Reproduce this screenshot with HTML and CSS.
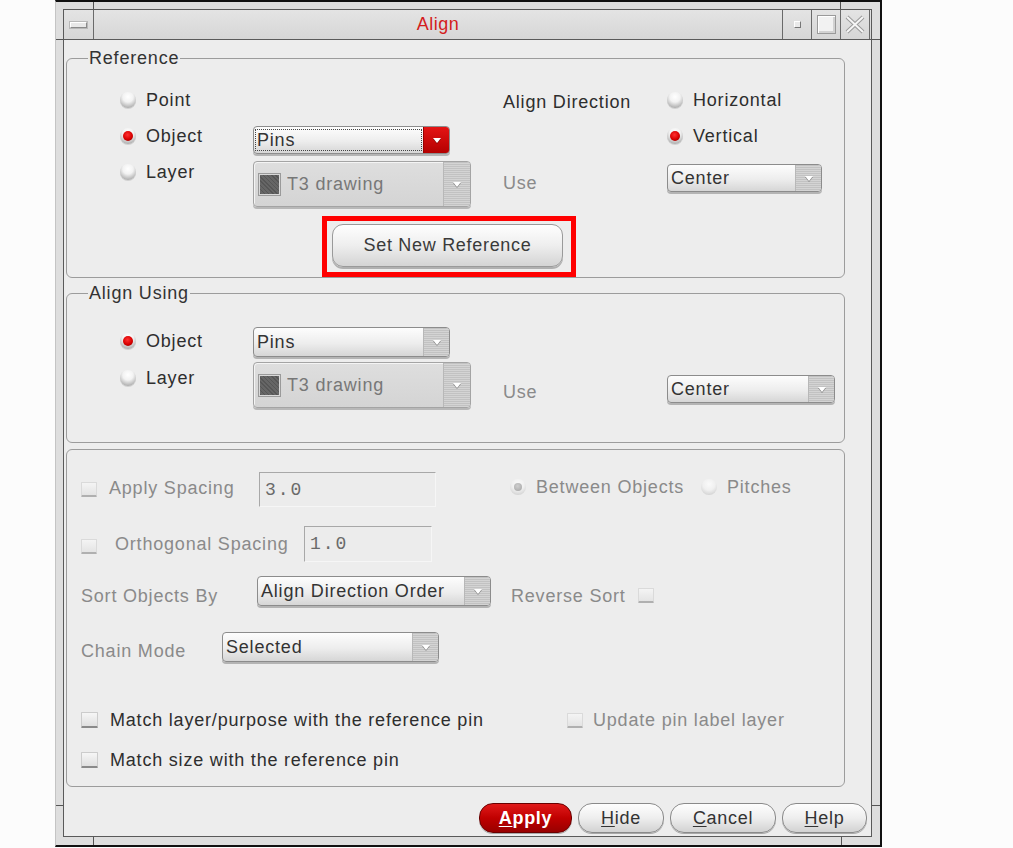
FILE: index.html
```html
<!DOCTYPE html>
<html>
<head>
<meta charset="utf-8">
<title>Align</title>
<link rel="stylesheet" href="styles.css">
</head>
<body>
<div class="window">
  <div class="inner">
    <div class="titlebar">
      <div class="tb-btn tb-menu"><span class="tb-dash"></span></div>
      <div class="tb-title">Align</div>
      <div class="tb-btn tb-side"><span class="tb-dot"></span></div>
      <div class="tb-btn tb-side"><span class="tb-square"></span></div>
      <div class="tb-btn tb-side tb-last">
        <svg class="tb-x" width="20" height="19" viewBox="0 0 20 19">
          <path d="M2 2 L18 17 M18 2 L2 17" stroke="#9a9a9a" stroke-width="4" fill="none"/>
          <path d="M2 2 L18 17 M18 2 L2 17" stroke="#f6f6f6" stroke-width="2" fill="none"/>
        </svg>
      </div>
    </div>

    <div class="content">
      <fieldset class="group g-ref">
        <legend>Reference</legend>
        <div class="form-grid">
          <label class="opt c1 mt4"><span class="radio"></span>Point</label>
          <span class="lbl c3 mt6">Align Direction</span>
          <label class="opt c4 mt4"><span class="radio"></span>Horizontal</label>

          <label class="opt c1 mt6"><span class="radio on"></span>Object</label>
          <div class="combo c2 mt6 w-pins"><span class="combo-text focus">Pins</span><span class="combo-arrow red"><span class="tri"></span></span></div>
          <label class="opt c4 mt6"><span class="radio on"></span>Vertical</label>

          <label class="opt c1 mt4"><span class="radio"></span>Layer</label>
          <div class="combo layer c2 mt3"><span class="swatch"></span><span class="combo-text">T3 drawing</span><span class="combo-arrow"><span class="tri"></span></span></div>
          <span class="lbl dim c3 mt15">Use</span>
          <div class="combo c4 mt6 w-center1"><span class="combo-text">Center</span><span class="combo-arrow"><span class="tri"></span></span></div>

          <div class="highlight c23 mt6"><button class="big-btn">Set New Reference</button></div>
        </div>
      </fieldset>

      <fieldset class="group g-using">
        <legend>Align Using</legend>
        <div class="form-grid rows-using">
          <label class="opt c1 mt6"><span class="radio on"></span>Object</label>
          <div class="combo c2 mt2 w-pins h30"><span class="combo-text">Pins</span><span class="combo-arrow"><span class="tri"></span></span></div>

          <label class="opt c1 mt7"><span class="radio"></span>Layer</label>
          <div class="combo layer c2 mt1"><span class="swatch"></span><span class="combo-text">T3 drawing</span><span class="combo-arrow"><span class="tri"></span></span></div>
          <span class="lbl dim c3 mt21">Use</span>
          <div class="combo c4 mt14 w-center2"><span class="combo-text">Center</span><span class="combo-arrow"><span class="tri"></span></span></div>
        </div>
      </fieldset>

      <fieldset class="group g-options">
        <div class="row row-spacing">
          <label class="chk-opt dim w178 mt7"><span class="check dis"></span><span class="mtm2">Apply Spacing</span></label>
          <div class="field w177 h35">3.0</div>
          <label class="opt dim w191 mt5"><span class="radio dis on-dis"></span>Between Objects</label>
          <label class="opt dim mt5"><span class="radio dis"></span>Pitches</label>
        </div>
        <div class="row row-ortho">
          <label class="chk-opt dim gap18 w223 mt10"><span class="check dis"></span><span class="mtm4">Orthogonal Spacing</span></label>
          <div class="field w128 h36">1.0</div>
        </div>
        <div class="row row-sort">
          <span class="lbl dim w176 mt10">Sort Objects By</span>
          <div class="combo w-sort h30"><span class="combo-text">Align Direction Order</span><span class="combo-arrow"><span class="tri"></span></span></div>
          <span class="lbl dim ml20 mt10">Reverse Sort</span>
          <span class="check dis ml12 mt12"></span>
        </div>
        <div class="row row-chain">
          <span class="lbl dim w141 mt9">Chain Mode</span>
          <div class="combo w-chain h30"><span class="combo-text">Selected</span><span class="combo-arrow"><span class="tri"></span></span></div>
        </div>
        <div class="row row-match1">
          <label class="chk-opt w486"><span class="check"></span>Match layer/purpose with the reference pin</label>
          <label class="chk-opt dim gap10"><span class="check dis"></span>Update pin label layer</label>
        </div>
        <div class="row row-match2">
          <label class="chk-opt"><span class="check"></span>Match size with the reference pin</label>
        </div>
      </fieldset>

      <div class="buttons">
        <button class="btn primary w93"><u>A</u>pply</button>
        <button class="btn w86"><u>H</u>ide</button>
        <button class="btn w106"><u>C</u>ancel</button>
        <button class="btn w85"><u>H</u>elp</button>
      </div>
    </div>
  </div>

  <span class="mark v t1"></span>
  <span class="mark v t2"></span>
  <span class="mark v b1"></span>
  <span class="mark v b2"></span>
  <span class="mark h l1"></span>
  <span class="mark h l2"></span>
  <span class="mark h r1"></span>
  <span class="mark h r2"></span>
</div>
</body>
</html>
```

FILE: styles.css
```css
* { box-sizing: border-box; }

body {
  margin: 0;
  background: #fcfcfc;
  font-family: "Liberation Sans", Arial, sans-serif;
  font-size: 18px;
  letter-spacing: 0.8px;
  color: #2e2e2e;
}

/* ---------- window frame ---------- */
.window {
  position: relative;
  margin-left: 55px;
  width: 827px;
  height: 847px;
  border: 2px solid #111;
  border-left: 1px solid #c4c4c4;
  padding: 7px 8px 8px 7px;
  background: #dedede;
}

.inner {
  height: 100%;
  border: 1px solid #5a5a5a;
  background: #ededed;
  display: flex;
  flex-direction: column;
}

.mark { position: absolute; background: #555; }
.mark.v { width: 1px; }
.mark.h { height: 1px; }
.mark.t1 { left: 37px; top: 0; height: 7px; }
.mark.t2 { left: 784px; top: 0; height: 7px; }
.mark.b1 { left: 37px; top: 835px; height: 8px; }
.mark.b2 { left: 785px; top: 835px; height: 8px; }
.mark.l1 { left: 0; top: 37px; width: 7px; }
.mark.l2 { left: 0; top: 803px; width: 7px; }
.mark.r1 { left: 816px; top: 37px; width: 8px; }
.mark.r2 { left: 816px; top: 803px; width: 8px; }

/* ---------- title bar ---------- */
.titlebar {
  height: 30px;
  display: flex;
  border-bottom: 1px solid #5a5a5a;
  background: linear-gradient(#e4e4e4, #d6d6d6);
  flex: none;
}
.tb-btn {
  width: 30px;
  display: flex;
  align-items: center;
  justify-content: center;
}
.tb-menu { border-right: 1px solid #6a6a6a; }
.tb-side { border-left: 1px solid #6a6a6a; width: 29px; }
.tb-last { width: 30px; border-right: 1px solid #6a6a6a; margin-right: 1px; }
.tb-title {
  flex: 1;
  text-align: center;
  color: #d41c1c;
  line-height: 29px;
  letter-spacing: 0.5px;
}
.tb-dash {
  width: 17px;
  height: 6px;
  border: 1px solid #8a8a8a;
  border-top-color: #fff;
  border-left-color: #fff;
  background: #e8e8e8;
  box-shadow: 0 0 0 1px #b8b8b8;
}
.tb-dot {
  width: 7px;
  height: 7px;
  border: 1px solid #777;
  border-top-color: #fff;
  border-left-color: #fff;
  background: #eaeaea;
}
.tb-square {
  width: 19px;
  height: 19px;
  border: 1px solid #9a9a9a;
  background: #f2f2f2;
  box-shadow: inset 1px 1px 0 #fff, inset -2px -2px 0 #d2d2d2;
}

/* ---------- content ---------- */
.content {
  flex: 1;
  display: flex;
  flex-direction: column;
}

.group {
  margin: 0 26px 0 2px;
  border: 1px solid #9c9c9c;
  border-radius: 6px;
  min-width: 0;
}
.group legend {
  margin-left: -32px;
  padding: 0 1px;
  line-height: 20px;
  color: #333;
}

.g-ref { margin-top: 8px; padding: 16px 0 0 53px; }
.g-ref .form-grid { margin-top: 2px; }
.g-using { margin-top: 5px; padding: 22px 0 31px 53px; }
.g-options { margin-top: 6px; padding: 22px 0 16px 14px; }

.form-grid {
  display: grid;
  grid-template-columns: 133px 250px 164px 1fr;
  grid-template-rows: 34px 38px 52px auto;
  align-items: start;
}
.rows-using { grid-template-rows: 36px 50px; }

.c1 { grid-column: 1; }
.c2 { grid-column: 2; }
.c3 { grid-column: 3; }
.c4 { grid-column: 4; }
.c23 { grid-column: 2 / 4; }

.mt1 { margin-top: 1px; }
.mt2 { margin-top: 2px; }
.mt3 { margin-top: 3px; }
.mt4 { margin-top: 4px; }
.mt5 { margin-top: 5px; }
.mt6 { margin-top: 6px; }
.mt7 { margin-top: 7px; }
.mt9 { margin-top: 9px; }
.mt10 { margin-top: 10px; }
.mt12 { margin-top: 12px; }
.mt14 { margin-top: 14px; }
.mt15 { margin-top: 15px; }
.mt21 { margin-top: 21px; }
.mtm2 { margin-top: -2px; }
.mtm4 { margin-top: -4px; }
.ml12 { margin-left: 12px; }
.ml20 { margin-left: 20px; }

.lbl { line-height: 20px; white-space: nowrap; }
.dim { color: #8a8a8a; }

.opt {
  display: flex;
  align-items: center;
  gap: 10px;
  height: 20px;
  white-space: nowrap;
}

.radio {
  position: relative;
  flex: none;
  width: 16px;
  height: 16px;
  border-radius: 50%;
  background: radial-gradient(circle at 50% 30%, #ffffff 0%, #f2f2f2 38%, #bcbcbc 72%, #8c8c8c 100%);
  box-shadow: 0 1px 0 rgba(0,0,0,0.12);
}
.radio.on::after {
  content: "";
  position: absolute;
  left: 3px;
  top: 3px;
  width: 10px;
  height: 10px;
  border-radius: 50%;
  background: radial-gradient(circle at 45% 38%, #ff3030 0%, #d80000 55%, #7a0000 100%);
}
.radio.dis {
  background: radial-gradient(circle at 50% 32%, #fafafa 0%, #f0f0f0 45%, #d4d4d4 80%, #bebebe 100%);
  box-shadow: none;
}
.radio.on-dis::after {
  content: "";
  position: absolute;
  left: 4px;
  top: 4px;
  width: 8px;
  height: 8px;
  border-radius: 50%;
  background: radial-gradient(circle at 45% 38%, #cfcfcf 0%, #b0b0b0 70%, #999 100%);
}

.check {
  flex: none;
  display: inline-block;
  width: 17px;
  height: 16px;
  background: linear-gradient(#f6f6f6, #e0e0e0);
  border: 1px solid #cccccc;
  border-bottom: 2px solid #8a8a8a;
  border-radius: 1px;
}
.check.dis {
  width: 16px;
  height: 15px;
  background: linear-gradient(#f4f4f4, #e4e4e4);
  border-color: #dadada;
  border-bottom-color: #b0b0b0;
}

.chk-opt {
  display: flex;
  align-items: center;
  gap: 12px;
  height: 20px;
  white-space: nowrap;
}
.gap10 { gap: 10px; }
.gap18 { gap: 18px; }

/* ---------- combo boxes ---------- */
.combo {
  display: flex;
  height: 28px;
  border: 1px solid #8c8c8c;
  border-radius: 4px;
  background: linear-gradient(#fdfdfd, #ededed 55%, #d6d6d6);
  box-shadow: 0 2px 0 #b4b4b4;
  overflow: hidden;
  color: #333;
}
.h30 { height: 30px; }
.combo-text {
  flex: 1;
  display: flex;
  align-items: center;
  padding-left: 3px;
  white-space: nowrap;
  overflow: hidden;
}
.combo-text.focus {
  margin: 2px 1px 2px 1px;
  padding-left: 1px;
  border: 1px dotted #444;
}
.combo-arrow {
  flex: none;
  width: 26px;
  display: flex;
  align-items: center;
  justify-content: center;
  border-left: 1px solid #b8b8b8;
  background: repeating-linear-gradient(#c2c2c2 0 1px, #d4d4d4 1px 2px);
}
.combo-arrow.red {
  border-left-color: #900;
  background: linear-gradient(#e41414, #b40000);
}
.tri {
  width: 0;
  height: 0;
  border-left: 4px solid transparent;
  border-right: 4px solid transparent;
  border-top: 5px solid #fff;
  filter: drop-shadow(0 1px 0 rgba(0,0,0,0.35));
}

.combo.layer {
  width: 218px;
  height: 46px;
  align-items: stretch;
  background: linear-gradient(#dedede, #d4d4d4);
  border-color: #a4a4a4;
  box-shadow: inset 1px 1px 0 #f4f4f4, 0 2px 0 #b8b8b8;
  color: #777;
}
.combo.layer .swatch {
  align-self: center;
  flex: none;
  width: 21px;
  height: 21px;
  margin-left: 5px;
  margin-right: 7px;
  border: 1px solid #d8d8d8;
  outline: 1px solid #9a9a9a;
  background: repeating-linear-gradient(45deg, #565656 0 1px, #666 1px 3px);
}
.combo.layer .combo-text { padding-left: 0; }
.combo.layer .combo-arrow { width: 27px; }

.w-pins { width: 197px; }
.w-center1 { width: 155px; }
.w-center2 { width: 168px; }
.w-sort { width: 234px; }
.w-chain { width: 217px; }

/* ---------- highlighted button ---------- */
.highlight {
  margin-left: 69px;
  width: 254px;
  border: 5px solid #ff0000;
  padding: 3px 8px 5px 5px;
}
.big-btn {
  display: block;
  width: 231px;
  height: 43px;
  font: inherit;
  letter-spacing: 0.7px;
  color: #3a3a3a;
  border: 1px solid #9a9a9a;
  border-radius: 11px;
  background: linear-gradient(#fefefe, #eeeeee 50%, #d4d4d4);
  box-shadow: 0 2px 0 #b0b0b0;
  padding: 0;
}

/* ---------- option rows ---------- */
.row { display: flex; align-items: flex-start; }
.row-ortho { margin-top: 19px; }
.row-sort { margin-top: 14px; }
.row-chain { margin-top: 26px; }
.row-match1 { margin-top: 48px; }
.row-match2 { margin-top: 20px; }

.w128 { width: 128px; }
.w141 { width: 141px; }
.w176 { width: 176px; }
.w177 { width: 177px; }
.w178 { width: 178px; }
.w191 { width: 191px; }
.w223 { width: 223px; }
.w486 { width: 486px; }
.h35 { height: 35px; }
.h36 { height: 36px; }

.field {
  flex: none;
  border: 1px solid;
  border-color: #a8a8a8 #f6f6f6 #f6f6f6 #a8a8a8;
  background: #ececec;
  font-family: "Liberation Mono", "Courier New", monospace;
  color: #6a6a6a;
  letter-spacing: 2px;
  padding-left: 5px;
  display: flex;
  align-items: center;
}
.row-spacing .field { margin-right: 74px; }

/* ---------- bottom buttons ---------- */
.buttons {
  margin-top: 16px;
  display: flex;
  justify-content: flex-end;
  gap: 6px;
  padding-right: 4px;
}
.btn {
  height: 30px;
  font: inherit;
  letter-spacing: 0.7px;
  color: #333;
  border: 1px solid #8a8a8a;
  border-radius: 14px;
  background: linear-gradient(#fefefe, #eeeeee 50%, #d2d2d2);
  box-shadow: 0 1px 0 #a8a8a8;
  padding: 0;
}
.btn.primary {
  color: #fff;
  font-weight: bold;
  border-color: #6a0000;
  background: linear-gradient(#e01a1a, #c00000 50%, #980000);
}
.btn u { text-decoration-thickness: 1px; text-underline-offset: 2px; }
.w85 { width: 85px; }
.w86 { width: 86px; }
.w93 { width: 93px; }
.w106 { width: 106px; }
```
